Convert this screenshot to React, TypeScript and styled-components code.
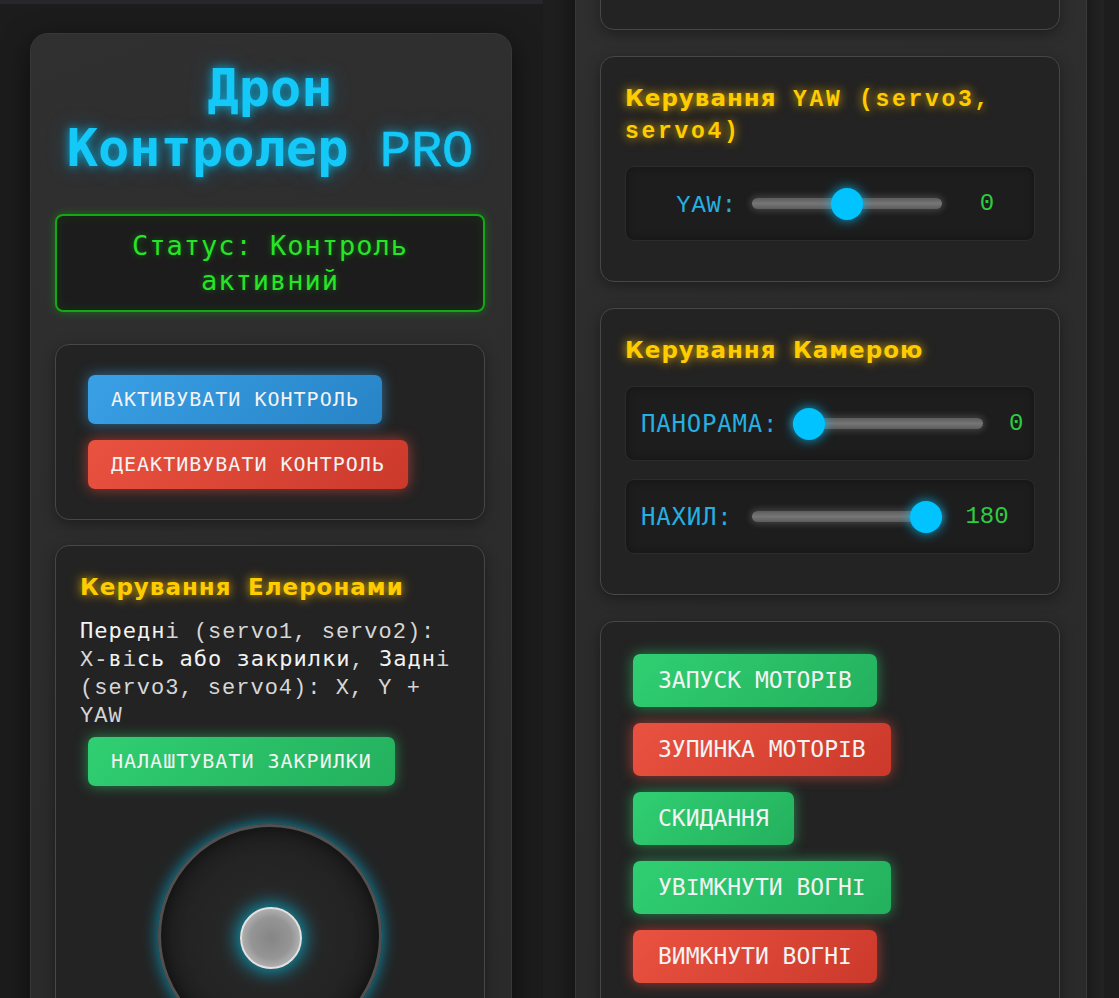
import React from 'react';
import styled, { createGlobalStyle, css } from 'styled-components';

const Global = createGlobalStyle`
  * { box-sizing: border-box; }
  html, body { margin: 0; padding: 0; background: #1b1b1b; }
  body {
    font-family: "DejaVu Sans Mono", monospace;
    color: #ececec;
    overflow: hidden;
  }
`;

const Page = styled.div`
  display: grid;
  grid-template-columns: 543px 561px 1fr;
  height: 998px;
  overflow: hidden;
`;

const LeftColumn = styled.div`
  background: #1c1c1c;
  border-top: 4px solid #26272a;
  padding: 29px 31px 0 30px;
`;

const RightColumn = styled.div`
  background: linear-gradient(90deg, #1f1f1f 0%, #252525 100%);
  padding: 0 17px 0 32px;
`;

const Edge = styled.div`
  background: #1d1d1d;
`;

const Panel = styled.div<{ $shift?: number; $gap?: number }>`
  display: flex;
  flex-direction: column;
  gap: ${(p) => p.$gap ?? 25}px;
  background: linear-gradient(160deg, #303030 0%, #2b2b2b 60%, #2a2a2a 100%);
  border: 1px solid #383838;
  border-radius: 18px;
  padding: 24px 26px 24px 24px;
  box-shadow: 0 8px 28px rgba(0, 0, 0, 0.55);
  margin-top: ${(p) => p.$shift ?? 0}px;
  min-height: 1200px;
`;

const Lat = styled.span`
  font-family: "Liberation Mono", monospace;
  line-height: 1;
`;

const Title = styled.h1`
  margin: 0 0 10px;
  font-family: "DejaVu Sans Mono", monospace;
  font-weight: bold;
  font-size: 52px;
  line-height: 60px;
  text-align: center;
  color: #14c8f8;
  text-shadow: 0 0 10px rgba(0, 200, 255, 0.75), 0 0 22px rgba(0, 180, 255, 0.35);
  ${Lat} {
    font-weight: normal;
    -webkit-text-stroke: 0.6px #14c8f8;
  }
`;

const Status = styled.div`
  margin-bottom: 7px;
  padding: 12px 20px;
  border: 2px solid #14a814;
  border-radius: 8px;
  background: #1c1c1c;
  box-shadow: 0 0 10px rgba(0, 220, 0, 0.35), inset 0 0 12px rgba(0, 200, 0, 0.12);
  color: #27e427;
  font-size: 27px;
  letter-spacing: 1px;
  line-height: 35px;
  text-align: center;
  text-shadow: 0 0 6px rgba(0, 255, 0, 0.35);
`;

const Card = styled.section<{ $top?: number }>`
  display: flex;
  flex-direction: column;
  align-items: flex-start;
  background: #232323;
  border: 1px solid #474747;
  border-radius: 14px;
  padding: ${(p) => p.$top ?? 22}px 24px 22px;
  box-shadow: 0 4px 14px rgba(0, 0, 0, 0.35);
`;

const Heading = styled.h2`
  margin: 3px 0 20px;
  font-family: "DejaVu Sans", sans-serif;
  font-weight: bold;
  font-size: 23px;
  letter-spacing: 1px;
  line-height: 32px;
  color: #ffcc00;
  text-shadow: 0 0 8px rgba(255, 200, 0, 0.7), 0 0 16px rgba(255, 180, 0, 0.3);
  ${Lat} {
    letter-spacing: 2.7px;
  }
`;

const Desc = styled.p`
  margin: -6px 0 0;
  font-size: 22px;
  letter-spacing: 1px;
  line-height: 28px;
  color: #f2f2f2;
  ${Lat} {
    color: #d6d6d6;
  }
`;

const palette = {
  blue: { from: '#3aa0e6', to: '#2784c6', glow: 'rgba(52, 152, 219, 0.65)' },
  red: { from: '#ea5240', to: '#cb392b', glow: 'rgba(231, 76, 60, 0.65)' },
  green: { from: '#30cf72', to: '#24b05d', glow: 'rgba(46, 204, 113, 0.6)' },
};

type Variant = keyof typeof palette;

const Button = styled.button<{ $variant: Variant; $large?: boolean }>`
  margin: 8px;
  border: none;
  border-radius: 7px;
  color: #f3f3f3;
  font-family: "DejaVu Sans Mono", monospace;
  text-transform: uppercase;
  cursor: pointer;
  white-space: nowrap;
  background: linear-gradient(135deg, ${(p) => palette[p.$variant].from}, ${(p) => palette[p.$variant].to});
  box-shadow: 0 0 14px ${(p) => palette[p.$variant].glow};
  ${(p) =>
    p.$large
      ? css`
          font-size: 23px;
          line-height: 27px;
          padding: 13px 25px;
        `
      : css`
          font-size: 20px;
          letter-spacing: 1px;
          line-height: 25px;
          padding: 12px 23px;
        `}
`;

const SliderRow = styled.div`
  align-self: stretch;
  display: flex;
  align-items: center;
  height: 75px;
  padding: 0 15px;
  margin-bottom: 18px;
  background: #1d1d1d;
  border: 1px solid #2c2c2c;
  border-radius: 9px;
  box-shadow: inset 0 0 8px rgba(0, 0, 0, 0.35);
  overflow: hidden;
`;

const Label = styled.span<{ $align?: 'left' | 'right' }>`
  min-width: 96px;
  flex-shrink: 0;
  font-size: 24px;
  letter-spacing: 0.8px;
  color: #25b0e2;
  text-align: ${(p) => p.$align ?? 'left'};
`;

const Range = styled.input`
  -webkit-appearance: none;
  appearance: none;
  flex-shrink: 0;
  width: 190px;
  height: 11px;
  margin: 0 15px;
  border-radius: 6px;
  background: linear-gradient(180deg, #5c5c5c 0%, #767676 50%, #5c5c5c 100%);
  box-shadow: 0 0 6px 2px rgba(110, 110, 110, 0.45);
  outline: none;
  &::-webkit-slider-thumb {
    -webkit-appearance: none;
    appearance: none;
    width: 32px;
    height: 32px;
    border-radius: 50%;
    background: #00c3ff;
    box-shadow: 0 0 12px rgba(0, 195, 255, 0.85);
    border: none;
  }
`;

const Value = styled.span`
  width: 60px;
  min-width: 36px;
  flex-shrink: 1;
  text-align: center;
  font-family: "Liberation Mono", monospace;
  font-size: 24px;
  color: #2ecc40;
`;

const Pad = styled.div`
  position: relative;
  align-self: center;
  margin-top: 30px;
  width: 224px;
  height: 224px;
  border-radius: 50%;
  border: 3px solid #505050;
  background: radial-gradient(circle at 50% 50%, #2b2b2b 0%, #232323 55%, #161616 100%);
  box-shadow: 0 0 16px rgba(0, 185, 230, 0.75), inset 0 0 18px rgba(0, 0, 0, 0.6);
`;

const Knob = styled.div`
  position: absolute;
  left: 50%;
  top: 50%;
  width: 62px;
  height: 62px;
  margin: -29px 0 0 -30px;
  border-radius: 50%;
  border: 2px solid #e2e2e2;
  background: radial-gradient(circle, #858585 0%, #959595 50%, #d4d4d4 100%);
  box-shadow: 0 0 18px 3px rgba(0, 200, 240, 0.7);
`;

function Mixed({ text }: { text: string }) {
  const parts = text.split(/([A-Za-z0-9іІ\s:(),+\-.]+)/);
  return (
    <>
      {parts.map((p, i) =>
        i % 2 === 1 ? <Lat key={i}>{p}</Lat> : p ? <React.Fragment key={i}>{p}</React.Fragment> : null
      )}
    </>
  );
}

type SliderProps = { label: string; min: number; max: number; value: number; align?: 'left' | 'right' };

function Slider({ label, min, max, value, align }: SliderProps) {
  return (
    <SliderRow>
      <Label $align={align}>
        <Mixed text={label} />
      </Label>
      <Range type="range" min={min} max={max} defaultValue={value} />
      <Value>{value}</Value>
    </SliderRow>
  );
}

export default function App() {
  return (
    <>
      <Global />
      <Page>
        <LeftColumn>
          <Panel>
            <Title>
              <Mixed text="Дрон" />
              <br />
              <Mixed text="Контролер PRO" />
            </Title>
            <Status>
              <Mixed text="Статус: Контроль активний" />
            </Status>
            <Card>
              <Button $variant="blue">АКТИВУВАТИ КОНТРОЛЬ</Button>
              <Button $variant="red">ДЕАКТИВУВАТИ КОНТРОЛЬ</Button>
            </Card>
            <Card>
              <Heading>
                <Mixed text="Керування Елеронами" />
              </Heading>
              <Desc>
                <Mixed text="Передні (servo1, servo2): X-вісь або закрилки, Задні (servo3, servo4): X, Y + YAW" />
              </Desc>
              <Button $variant="green">НАЛАШТУВАТИ ЗАКРИЛКИ</Button>
              <Pad>
                <Knob />
              </Pad>
            </Card>
          </Panel>
        </LeftColumn>
        <RightColumn>
          <Panel $shift={-189} $gap={26}>
            <Card>
              <Heading>
                <Mixed text="Керування Тягою" />
              </Heading>
              <Slider label="ТЯГА:" min={0} max={100} value={0} />
            </Card>
            <Card>
              <Heading>
                <Mixed text="Керування YAW (servo3, servo4)" />
              </Heading>
              <Slider label="YAW:" min={-90} max={90} value={0} align="right" />
            </Card>
            <Card>
              <Heading>
                <Mixed text="Керування Камерою" />
              </Heading>
              <Slider label="ПАНОРАМА:" min={0} max={180} value={0} />
              <Slider label="НАХИЛ:" min={0} max={180} value={180} />
            </Card>
            <Card $top={24}>
              <Button $variant="green" $large>
                <Mixed text="ЗАПУСК МОТОРІВ" />
              </Button>
              <Button $variant="red" $large>
                <Mixed text="ЗУПИНКА МОТОРІВ" />
              </Button>
              <Button $variant="green" $large>
                СКИДАННЯ
              </Button>
              <Button $variant="green" $large>
                <Mixed text="УВІМКНУТИ ВОГНІ" />
              </Button>
              <Button $variant="red" $large>
                <Mixed text="ВИМКНУТИ ВОГНІ" />
              </Button>
            </Card>
          </Panel>
        </RightColumn>
        <Edge />
      </Page>
    </>
  );
}
